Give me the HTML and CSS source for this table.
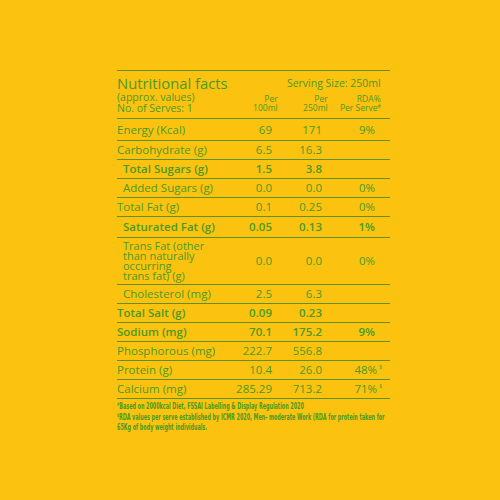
FILE: index.html
```html
<!DOCTYPE html>
<html lang="en">
<head>
    <meta charset="UTF-8">
    <title>Nutritional facts</title>
    <link rel="stylesheet" href="styles.css">
</head>
<body>
    <div class="panel">
        <div class="facts">
            <div class="head">
                <div class="head-left">
                    <h1>Nutritional facts</h1>
                    <p>(approx. values)</p>
                    <p>No. of Serves: 1</p>
                </div>
                <div class="head-right">
                    <div class="serving">Serving Size: 250ml</div>
                    <div class="cols">
                        <span>Per<br>100ml</span>
                        <span>Per<br>250ml</span>
                        <span>RDA%<br>Per Serve<sup>#</sup></span>
                    </div>
                </div>
            </div>

            <div class="row tall"><span>Energy (Kcal)</span><span>69</span><span>171</span><span>9%</span></div>
            <div class="row"><span>Carbohydrate (g)</span><span>6.5</span><span>16.3</span><span></span></div>
            <div class="row sub bold"><span>Total Sugars (g)</span><span>1.5</span><span>3.8</span><span></span></div>
            <div class="row sub"><span>Added Sugars (g)</span><span>0.0</span><span>0.0</span><span>0%</span></div>
            <div class="row"><span>Total Fat (g)</span><span>0.1</span><span>0.25</span><span>0%</span></div>
            <div class="row sub bold mid"><span>Saturated Fat (g)</span><span>0.05</span><span>0.13</span><span>1%</span></div>
            <div class="row sub trans"><span>Trans Fat (other<br>than naturally<br>occurring<br>trans fat) (g)</span><span>0.0</span><span>0.0</span><span>0%</span></div>
            <div class="row sub"><span>Cholesterol (mg)</span><span>2.5</span><span>6.3</span><span></span></div>
            <div class="row bold"><span>Total Salt (g)</span><span>0.09</span><span>0.23</span><span></span></div>
            <div class="row bold"><span>Sodium (mg)</span><span>70.1</span><span>175.2</span><span>9%</span></div>
            <div class="row"><span>Phosphorous (mg)</span><span>222.7</span><span>556.8</span><span></span></div>
            <div class="row"><span>Protein (g)</span><span>10.4</span><span>26.0</span><span>48%<sup>$</sup></span></div>
            <div class="row"><span>Calcium (mg)</span><span>285.29</span><span>713.2</span><span>71%<sup>$</sup></span></div>

            <div class="notes">
                <p><sup>#</sup>Based on 2000kcal Diet, FSSAI Labelling &amp; Display Regulation 2020</p>
                <p><sup>$</sup>RDA values per serve established by ICMR 2020, Men- moderate Work (RDA for protein taken for<br>65Kg of body weight individuals.</p>
            </div>
        </div>
    </div>
</body>
</html>
```

FILE: styles.css
```css
body {
    margin: 0;
    background-color: #fbc30f;
    font-family: "Open Sans", sans-serif;
    color: #4a9a26;
}

.panel {
    width: 500px;
    height: 500px;
    padding: 70px 0 0 117px;
    box-sizing: border-box;
}

.facts {
    width: 273px;
    border-top: 1px solid #5e9124;
}

.head {
    display: flex;
    height: 47px;
    border-bottom: 1px solid #5e9124;
}

.head-left {
    flex: 1;
    white-space: nowrap;
}

.head-left h1 {
    margin: 4px 0 0;
    font-size: 14.8px;
    font-weight: 400;
    line-height: 17px;
}

.head-left p {
    margin: 0;
    font-size: 10.5px;
    line-height: 11px;
}

.head-right {
    width: 153px;
    padding-right: 15px;
    text-align: right;
}

.serving {
    margin-top: 5px;
    font-size: 10.5px;
    line-height: 14px;
}

.cols {
    display: grid;
    grid-template-columns: 50px 50px 53px;
    margin-top: 4px;
    font-size: 8.5px;
    line-height: 9px;
}

.cols sup,
.row sup {
    font-size: 5px;
    vertical-align: top;
    line-height: 6px;
}

.row {
    display: grid;
    grid-template-columns: 1fr 50px 50px 53px;
    padding-right: 15px;
    align-items: center;
    height: 18px;
    border-bottom: 1px solid #5e9124;
    font-size: 11.5px;
    line-height: 12px;
    white-space: nowrap;
}

.row span:not(:first-child) {
    text-align: right;
}

.row sup {
    margin-left: 2px;
    margin-right: -7px;
}

.row.tall {
    height: 20px;
    padding-top: 1px;
}

.row.mid {
    height: 20px;
}

.row.sub span:first-child {
    padding-left: 6px;
}

.row.bold {
    font-weight: 600;
}

.row.trans {
    height: 46px;
}

.row.trans span:first-child {
    font-size: 11px;
    line-height: 10px;
}

.notes {
    width: 460px;
    padding-top: 2px;
    font-family: "DejaVu Sans Condensed", "DejaVu Sans", sans-serif;
    font-stretch: condensed;
    font-weight: 700;
    font-size: 9px;
    line-height: 10.5px;
    white-space: nowrap;
    transform: scaleX(0.6);
    transform-origin: left top;
}

.notes p {
    margin: 0;
}

.notes sup {
    font-size: 5px;
    vertical-align: top;
    line-height: 6px;
}
```
